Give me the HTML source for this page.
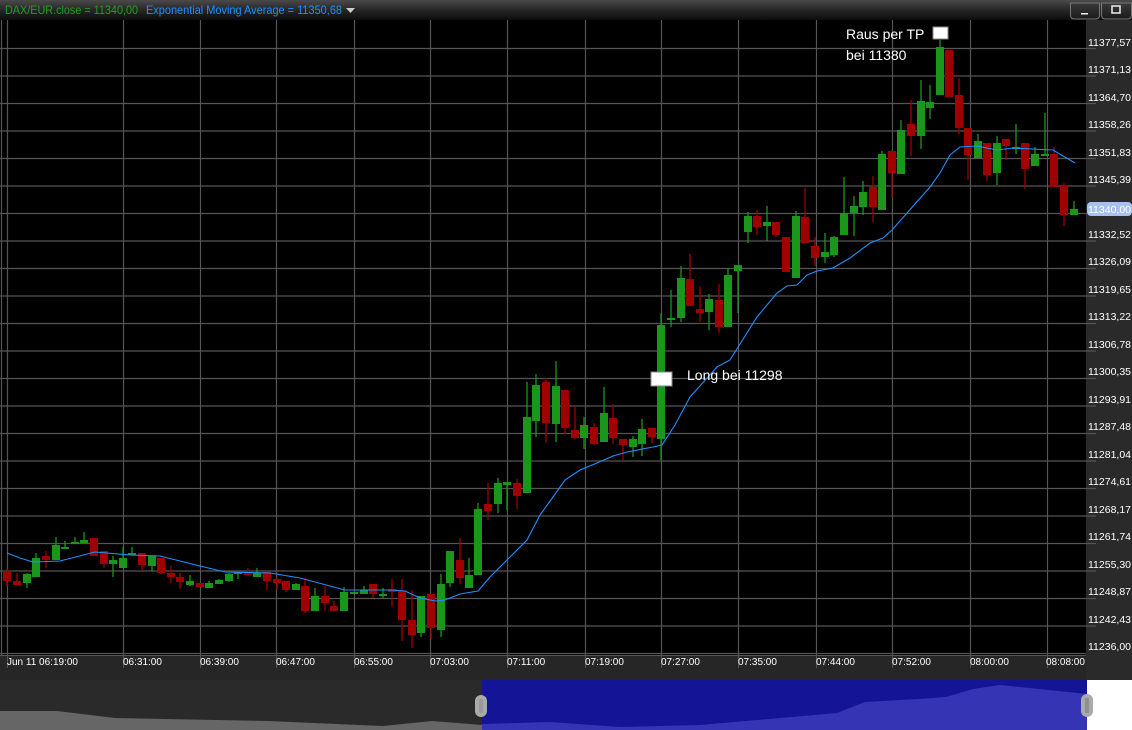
<!DOCTYPE html>
<html><head><meta charset="utf-8"><style>
html,body{margin:0;padding:0;background:#000;width:1132px;height:730px;overflow:hidden}
svg{display:block}
text{font-family:"Liberation Sans",Arial,sans-serif}
</style></head><body>
<svg width="1132" height="730" viewBox="0 0 1132 730" xmlns="http://www.w3.org/2000/svg">
<defs>
<linearGradient id="tb" x1="0" y1="0" x2="0" y2="1"><stop offset="0" stop-color="#4a4a4a"/><stop offset="0.5" stop-color="#262626"/><stop offset="1" stop-color="#0c0c0c"/></linearGradient>
<linearGradient id="bt" x1="0" y1="0" x2="0" y2="1"><stop offset="0" stop-color="#3a3a3a"/><stop offset="1" stop-color="#1a1a1a"/></linearGradient>
</defs>
<rect x="0" y="0" width="1132" height="730" fill="#000"/>
<!-- title bar -->
<rect x="0" y="0" width="1132" height="20" fill="url(#tb)"/>
<text x="5" y="14" font-size="12" fill="#1fa01f" textLength="133" lengthAdjust="spacingAndGlyphs">DAX/EUR.close = 11340,00</text>
<text x="146" y="14" font-size="12" fill="#1e90ff" textLength="196" lengthAdjust="spacingAndGlyphs">Exponential Moving Average = 11350,68</text>
<path d="M346 8h9l-4.5 5z" fill="#ccc"/>
<path d="M1070.5 3v12q0 4 4 4h21q4 0 4-4V3z" fill="url(#bt)" stroke="#777"/>
<path d="M1101.5 3v12q0 4 4 4h22q4 0 4-4V3z" fill="url(#bt)" stroke="#777"/>
<rect x="1081" y="13" width="7" height="1.5" fill="#eee"/>
<rect x="1112" y="6" width="8" height="7" fill="none" stroke="#eee" stroke-width="1.5"/>
<!-- grid -->
<g stroke="#555" stroke-width="1.2">
<path d="M1.5 20V655M7.5 20V655M123.5 20V668M200.5 20V668M276.5 20V668M354.5 20V668M430.5 20V668M507.5 20V668M585.5 20V668M661.5 20V668M738.5 20V668M816.5 20V668M892.5 20V668M970.5 20V668M1047.5 20V668"/>
<path d="M0 48.5H1096M0 76H1096M0 103.5H1096M0 131H1096M0 158.5H1096M0 186H1096M0 213.5H1096M0 241H1096M0 268.5H1096M0 296H1096M0 323.5H1096M0 351H1096M0 378.5H1096M0 406H1096M0 433.5H1096M0 461H1096M0 488.5H1096M0 516H1096M0 543.5H1096M0 571H1096M0 598.5H1096M0 626H1096M0 653.5H1096"/>
</g>
<!-- axes panels -->
<rect x="1086" y="20" width="46" height="660" fill="#2a2a2a"/>
<g stroke="#555" stroke-width="1.2"><path d="M1086 48.5H1096M1086 76H1096M1086 103.5H1096M1086 131H1096M1086 158.5H1096M1086 186H1096M1086 213.5H1096M1086 241H1096M1086 268.5H1096M1086 296H1096M1086 323.5H1096M1086 351H1096M1086 378.5H1096M1086 406H1096M1086 433.5H1096M1086 461H1096M1086 488.5H1096M1086 516H1096M1086 543.5H1096M1086 571H1096M1086 598.5H1096M1086 626H1096"/></g>
<rect x="0" y="655" width="1086" height="25" fill="#262626"/>
<line x1="0" y1="655.5" x2="1086" y2="655.5" stroke="#555"/>
<g stroke="#555"><path d="M7.5 655V668M123.5 655V668M200.5 655V668M276.5 655V668M354.5 655V668M430.5 655V668M507.5 655V668M585.5 655V668M661.5 655V668M738.5 655V668M816.5 655V668M892.5 655V668M970.5 655V668M1047.5 655V668"/></g>
<g font-size="10" fill="#fff">
<text x="7" y="665">Jun 11 06:19:00</text>
<text x="123" y="665">06:31:00</text>
<text x="200" y="665">06:39:00</text>
<text x="276" y="665">06:47:00</text>
<text x="354" y="665">06:55:00</text>
<text x="430" y="665">07:03:00</text>
<text x="507" y="665">07:11:00</text>
<text x="585" y="665">07:19:00</text>
<text x="661" y="665">07:27:00</text>
<text x="738" y="665">07:35:00</text>
<text x="816" y="665">07:44:00</text>
<text x="892" y="665">07:52:00</text>
<text x="970" y="665">08:00:00</text>
<text x="1046" y="665">08:08:00</text>
</g>
<g font-size="10.5" fill="#fff">
<text x="1088" y="46">11377,57</text>
<text x="1088" y="73">11371,13</text>
<text x="1088" y="101">11364,70</text>
<text x="1088" y="128">11358,26</text>
<text x="1088" y="156">11351,83</text>
<text x="1088" y="183">11345,39</text>
<text x="1088" y="238">11332,52</text>
<text x="1088" y="265">11326,09</text>
<text x="1088" y="293">11319,65</text>
<text x="1088" y="320">11313,22</text>
<text x="1088" y="348">11306,78</text>
<text x="1088" y="375">11300,35</text>
<text x="1088" y="403">11293,91</text>
<text x="1088" y="430">11287,48</text>
<text x="1088" y="458">11281,04</text>
<text x="1088" y="485">11274,61</text>
<text x="1088" y="513">11268,17</text>
<text x="1088" y="540">11261,74</text>
<text x="1088" y="568">11255,30</text>
<text x="1088" y="595">11248,87</text>
<text x="1088" y="623">11242,43</text>
<text x="1088" y="650">11236,00</text>
</g>
<rect x="1087" y="202" width="45" height="14" rx="4" fill="#a8c0f0"/>
<text x="1088" y="213" font-size="10.5" fill="#fff">11340,00</text>
<!-- navigator -->
<rect x="0" y="680" width="482" height="50" fill="#2a2a2a"/>
<path d="M0 711L57 711L115 718L268 721L383 726L432 721L482 725V730H0Z" fill="#666"/>
<rect x="482" y="680" width="605" height="50" fill="#141496"/>
<path d="M482 724L550 722L620 727L700 725L837 713L865 702L919 699L946 697L973 689L1000 685L1087 694V730H482Z" fill="#3434b4"/>
<rect x="1087" y="680" width="45" height="50" fill="#fff"/>
<rect x="475" y="695" width="12" height="22" rx="6" fill="#aaa"/>
<path d="M480 699v14M482 699v14" stroke="#888"/>
<rect x="1081" y="694" width="12" height="23" rx="6" fill="#aaa"/>
<path d="M1086 698v15M1088 698v15" stroke="#777"/>
<!-- wicks -->
<path stroke="#a00000" stroke-width="1.3" fill="none" d="M7 569V586M17 573V586M46 551V568M94 538V556M104 551V568M142 553V571M161 558V574M171 566V583M180 573V589M200 583V587M248 568V575M267 572V590M277 577V590M286 581V592M305 578V613M325 586V611M334 601V611M373 584V598M392 579V607M402 579V641M412 590V648M431 594V639M460 538V584M488 483V520M517 479V509M546 378V443M565 390V434M575 406V439M594 423V445M613 404V444M623 439V460M652 428V443M690 254V306M700 286V322M719 284V333M757 210V235M776 222V237M786 237V272M805 188V243M815 237V266M873 176V222M892 151V198M911 100V156M949 50V97M959 78V134M968 128V180M987 143V181M1006 139V160M1025 143V189M1054 147V187M1064 183V226"/>
<path stroke="#1a961a" stroke-width="1.3" fill="none" d="M27 573V588M36 553V577M56 537V560M65 541V549M75 537V543M84 532V543M113 556V577M123 547V568M132 547V555M152 556V571M190 575V586M209 581V588M219 579V584M229 573V582M238 572V579M257 568V577M296 583V590M315 588V611M344 587V611M354 592V594M364 586V594M383 588V598M421 596V637M441 574V637M450 551V587M469 558V588M478 503V575M498 478V513M507 482V510M527 382V493M536 374V437M556 361V442M584 417V449M604 387V442M633 436V457M642 419V456M661 313V460M671 290V327M681 266V322M709 294V330M728 268V327M738 265V313M748 212V243M767 206V241M796 211V278M825 233V263M834 236V257M844 177V235M854 196V236M863 181V215M882 151V210M901 120V174M921 80V149M930 85V119M940 40V95M978 134V158M997 136V185M1016 124V154M1035 147V166M1045 113V156M1074 201V215"/>
<!-- red bodies -->
<g fill="#a00000">
<rect x="3" y="571" width="8" height="10"/><rect x="13" y="581" width="8" height="4"/><rect x="42" y="556" width="8" height="4"/><rect x="90" y="538" width="8" height="18"/><rect x="100" y="551" width="8" height="13"/><rect x="138" y="553" width="8" height="12"/><rect x="157" y="558" width="8" height="15"/><rect x="167" y="573" width="8" height="4"/><rect x="176" y="577" width="8" height="5"/><rect x="196" y="583" width="8" height="4"/><rect x="244" y="572" width="8" height="3"/><rect x="263" y="572" width="8" height="9"/><rect x="273" y="579" width="8" height="4"/><rect x="282" y="581" width="8" height="9"/><rect x="301" y="586" width="8" height="25"/><rect x="321" y="596" width="8" height="7"/><rect x="330" y="606" width="8" height="5"/><rect x="369" y="584" width="8" height="10"/><rect x="388" y="589" width="8" height="3"/><rect x="398" y="591" width="8" height="29"/><rect x="408" y="620" width="8" height="15"/><rect x="427" y="594" width="8" height="34"/><rect x="456" y="560" width="8" height="18"/><rect x="484" y="504" width="8" height="7"/><rect x="513" y="483" width="8" height="13"/><rect x="542" y="382" width="8" height="41"/><rect x="561" y="390" width="8" height="38"/><rect x="571" y="430" width="8" height="8"/><rect x="590" y="427" width="8" height="17"/><rect x="609" y="418" width="8" height="20"/><rect x="619" y="439" width="8" height="6"/><rect x="648" y="428" width="8" height="9"/><rect x="686" y="279" width="8" height="27"/><rect x="696" y="309" width="8" height="4"/><rect x="715" y="300" width="8" height="27"/><rect x="753" y="216" width="8" height="11"/><rect x="772" y="222" width="8" height="13"/><rect x="782" y="237" width="8" height="35"/><rect x="801" y="217" width="8" height="26"/><rect x="811" y="246" width="8" height="12"/><rect x="869" y="187" width="8" height="20"/><rect x="888" y="151" width="8" height="22"/><rect x="907" y="124" width="8" height="12"/><rect x="945" y="50" width="8" height="47"/><rect x="955" y="95" width="8" height="33"/><rect x="964" y="128" width="8" height="27"/><rect x="983" y="143" width="8" height="32"/><rect x="1002" y="139" width="8" height="7"/><rect x="1021" y="143" width="8" height="26"/><rect x="1050" y="154" width="8" height="33"/><rect x="1060" y="186" width="8" height="29"/>
</g>
<!-- green bodies -->
<g fill="#1a961a">
<rect x="23" y="574" width="8" height="9"/><rect x="32" y="558" width="8" height="19"/><rect x="52" y="545" width="8" height="15"/><rect x="61" y="547" width="8" height="2"/><rect x="71" y="542" width="8" height="2"/><rect x="80" y="540" width="8" height="3"/><rect x="109" y="560" width="8" height="4"/><rect x="119" y="558" width="8" height="10"/><rect x="128" y="553" width="8" height="2"/><rect x="148" y="556" width="8" height="10"/><rect x="186" y="581" width="8" height="4"/><rect x="205" y="583" width="8" height="5"/><rect x="215" y="580" width="8" height="4"/><rect x="225" y="574" width="8" height="7"/><rect x="234" y="572" width="8" height="2"/><rect x="253" y="573" width="8" height="4"/><rect x="292" y="584" width="8" height="6"/><rect x="311" y="596" width="8" height="15"/><rect x="340" y="592" width="8" height="19"/><rect x="350" y="592" width="8" height="2"/><rect x="360" y="590" width="8" height="4"/><rect x="379" y="594" width="8" height="2"/><rect x="417" y="596" width="8" height="37"/><rect x="437" y="584" width="8" height="46"/><rect x="446" y="551" width="8" height="32"/><rect x="465" y="575" width="8" height="13"/><rect x="474" y="509" width="8" height="66"/><rect x="494" y="483" width="8" height="21"/><rect x="503" y="482" width="8" height="3"/><rect x="523" y="417" width="8" height="76"/><rect x="532" y="385" width="8" height="36"/><rect x="552" y="386" width="8" height="38"/><rect x="580" y="425" width="8" height="13"/><rect x="600" y="413" width="8" height="29"/><rect x="629" y="439" width="8" height="8"/><rect x="638" y="429" width="8" height="15"/><rect x="657" y="325" width="8" height="114"/><rect x="667" y="318" width="8" height="2"/><rect x="677" y="278" width="8" height="40"/><rect x="705" y="299" width="8" height="13"/><rect x="724" y="275" width="8" height="52"/><rect x="734" y="265" width="8" height="6"/><rect x="744" y="216" width="8" height="16"/><rect x="763" y="222" width="8" height="4"/><rect x="792" y="216" width="8" height="62"/><rect x="821" y="252" width="8" height="5"/><rect x="830" y="237" width="8" height="18"/><rect x="840" y="213" width="8" height="22"/><rect x="850" y="206" width="8" height="7"/><rect x="859" y="192" width="8" height="15"/><rect x="878" y="154" width="8" height="56"/><rect x="897" y="130" width="8" height="44"/><rect x="917" y="101" width="8" height="35"/><rect x="926" y="102" width="8" height="6"/><rect x="936" y="47" width="8" height="48"/><rect x="974" y="141" width="8" height="17"/><rect x="993" y="143" width="8" height="30"/><rect x="1012" y="147" width="8" height="2"/><rect x="1031" y="154" width="8" height="12"/><rect x="1041" y="154" width="8" height="2"/><rect x="1070" y="209" width="8" height="6"/>
</g>
<!-- EMA -->
<polyline fill="none" stroke="#1e90ff" stroke-width="1.1" points="7,553 20,558 33,562 60,561 95,552 130,555 160,556 200,566 225,572 270,573 300,578 330,586 345,590 390,590 405,591 420,598 435,601 445,600 460,594 478,591 490,577 507,560 527,540 540,515 553,497 565,480 580,470 597,463 613,456 627,452 653,447 662,445 675,425 690,397 717,367 730,360 757,317 777,293 787,286 797,285 807,275 817,271 833,268 850,258 870,243 883,238 892,230 907,213 930,187 940,173 950,155 960,147 977,146 997,150 1013,148 1053,150 1075,163"/>
<!-- annotations -->
<rect x="651" y="372" width="21" height="14" fill="#fff" stroke="#888"/>
<text x="687" y="380" font-size="14" fill="#fff">Long bei 11298</text>
<rect x="933" y="27" width="15" height="12" fill="#fff" stroke="#888"/>
<text x="846" y="39" font-size="14" fill="#fff">Raus per TP</text>
<text x="846" y="60" font-size="14" fill="#fff">bei 11380</text>
</svg>
</body></html>
